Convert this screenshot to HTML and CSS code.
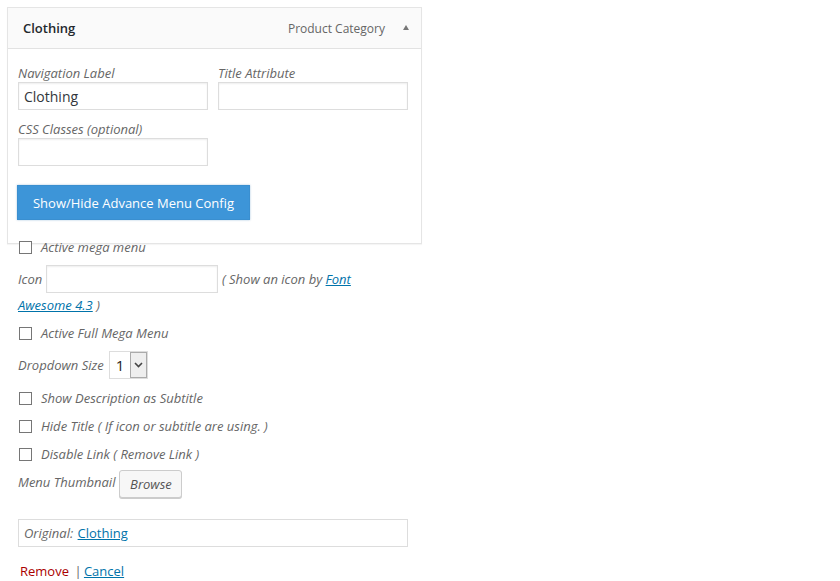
FILE: index.html
```html
<!DOCTYPE html>
<html lang="en">
<head>
    <meta charset="UTF-8">
    <title>Menu item - Clothing</title>
    <link rel="stylesheet" href="styles.css">
</head>
<body>
    <div class="menu-item">
        <div class="item-bar">
            <span class="item-title">Clothing</span>
            <span class="item-type">Product Category</span>
            <span class="item-toggle"></span>
        </div>

        <div class="item-settings">
            <div class="field-row">
                <label class="field">
                    <span class="field-label">Navigation Label</span>
                    <input type="text" class="text-input" value="Clothing">
                </label>
                <label class="field">
                    <span class="field-label">Title Attribute</span>
                    <input type="text" class="text-input">
                </label>
            </div>
            <div class="field-row second">
                <label class="field">
                    <span class="field-label">CSS Classes (optional)</span>
                    <input type="text" class="text-input">
                </label>
            </div>

            <button class="advance-btn">Show/Hide Advance Menu Config</button>
        </div>
    </div>

    <div class="advance">
        <p class="check-row"><span class="checkbox"></span>Active mega menu</p>
        <p class="icon-row">Icon <input type="text" class="icon-input"> ( Show an icon by <a href="#">Font Awesome 4.3</a> )</p>
        <p class="check-row"><span class="checkbox"></span>Active Full Mega Menu</p>
        <p class="select-row">Dropdown Size
            <span class="fake-select">
                <span class="select-value">1</span>
                <span class="select-arrow">
                    <svg width="9" height="6" viewBox="0 0 9 6"><path d="M1 1l3.5 3.5L8 1" fill="none" stroke="#444" stroke-width="1.6"/></svg>
                </span>
            </span>
        </p>
        <p class="check-row"><span class="checkbox"></span>Show Description as Subtitle</p>
        <p class="check-row"><span class="checkbox"></span>Hide Title ( If icon or subtitle are using. )</p>
        <p class="check-row"><span class="checkbox"></span>Disable Link ( Remove Link )</p>
        <p class="thumb-row">Menu Thumbnail <button class="browse-btn">Browse</button></p>

        <div class="original">Original: <a href="#">Clothing</a></div>

        <div class="actions">
            <a href="#" class="remove">Remove</a>
            <span class="sep">|</span>
            <a href="#" class="cancel">Cancel</a>
        </div>
    </div>
</body>
</html>
```

FILE: styles.css
```css
* {
    margin: 0;
    padding: 0;
    box-sizing: border-box;
}

body {
    font-family: "Open Sans", "Liberation Sans", sans-serif;
    font-size: 13px;
    color: #444;
    background: #fff;
    padding: 7px 0 0 7px;
}

a {
    color: #0073aa;
}

.menu-item {
    width: 415px;
    height: 237px;
    border: 1px solid #e5e5e5;
    box-shadow: 0 1px 1px rgba(0, 0, 0, .04);
}

.item-bar {
    height: 41px;
    background: #fafafa;
    border-bottom: 1px solid #e2e2e2;
    display: flex;
    align-items: center;
    padding: 0 12px 0 15px;
}

.item-title {
    font-weight: 600;
    color: #23282d;
    flex: 1;
}

.item-type {
    font-size: 12px;
    color: #666;
    margin-right: 18px;
}

.item-toggle {
    width: 0;
    height: 0;
    border-left: 3.5px solid transparent;
    border-right: 3.5px solid transparent;
    border-bottom: 5px solid #777;
    margin-top: -2px;
}

.item-settings {
    padding: 15px 12px 0 10px;
}

.field-row {
    display: flex;
    gap: 10px;
}

.field-row.second {
    margin-top: 10px;
}

.field {
    width: 190px;
    display: flex;
    flex-direction: column;
}

.field-label,
.advance {
    font-style: italic;
    color: #666;
}

.field-label {
    line-height: 18px;
}

.text-input {
    height: 28px;
    border: 1px solid #ddd;
    box-shadow: inset 0 1px 2px rgba(0, 0, 0, .07);
    font-family: inherit;
    font-size: 14px;
    color: #32373c;
    padding: 0 5px;
    outline: none;
}

.advance-btn {
    display: block;
    margin: 19px 0 0 -1px;
    width: 233px;
    height: 35px;
    background: #3d95d8;
    border: 1px solid #3a8fd0;
    box-shadow: 0 0 2px rgba(0, 90, 160, .35);
    color: #fff;
    font-family: inherit;
    font-size: 13px;
}

/* the advanced options spill over the bottom of the card */
.advance {
    width: 390px;
    margin: -6px 0 0 11px;
}

.advance p {
    line-height: 18px;
}

.check-row {
    display: flex;
    align-items: center;
    margin-bottom: 10px;
}

.checkbox {
    width: 13px;
    height: 13px;
    border: 1px solid #767676;
    background: #fff;
    margin: 0 9px 0 1px;
}

.icon-row {
    margin: -1px 0 10px;
}

.icon-input {
    width: 172px;
    height: 28px;
    vertical-align: middle;
    border: 1px solid #ddd;
    box-shadow: inset 0 1px 2px rgba(0, 0, 0, .07);
    margin: 0 1px 3px 0;
    outline: none;
}

.select-row {
    display: flex;
    align-items: center;
    gap: 5px;
    margin: -1px 0 10px;
}

.fake-select {
    display: flex;
    height: 28px;
    width: 39px;
    border: 1px solid #ddd;
    font-style: normal;
    background: #fff;
}

.select-value {
    flex: 1;
    font-size: 15px;
    color: #222;
    line-height: 26px;
    padding-left: 6px;
}

.select-arrow {
    width: 17px;
    background: #eee;
    border: 1px solid #aaa;
    display: flex;
    align-items: center;
    justify-content: center;
}

.thumb-row {
    display: flex;
    align-items: flex-start;
    gap: 4px;
}

.browse-btn {
    margin-top: -3px;
    width: 63px;
    height: 28px;
    border: 1px solid #ccc;
    border-radius: 3px;
    background: #f7f7f7;
    box-shadow: 0 1px 0 #ccc;
    font-family: inherit;
    font-style: italic;
    font-size: 13px;
    color: #555;
}

.original {
    margin-top: 21px;
    height: 28px;
    border: 1px solid #ddd;
    line-height: 26px;
    padding-left: 5px;
    word-spacing: 1px;
}

.original a {
    font-style: normal;
    word-spacing: 0;
}

.actions {
    margin-top: 15px;
    font-style: normal;
    padding-left: 2px;
}

.remove {
    color: #a00;
    text-decoration: none;
}

.sep {
    color: #666;
    margin: 0 -1px 0 2px;
}
```
